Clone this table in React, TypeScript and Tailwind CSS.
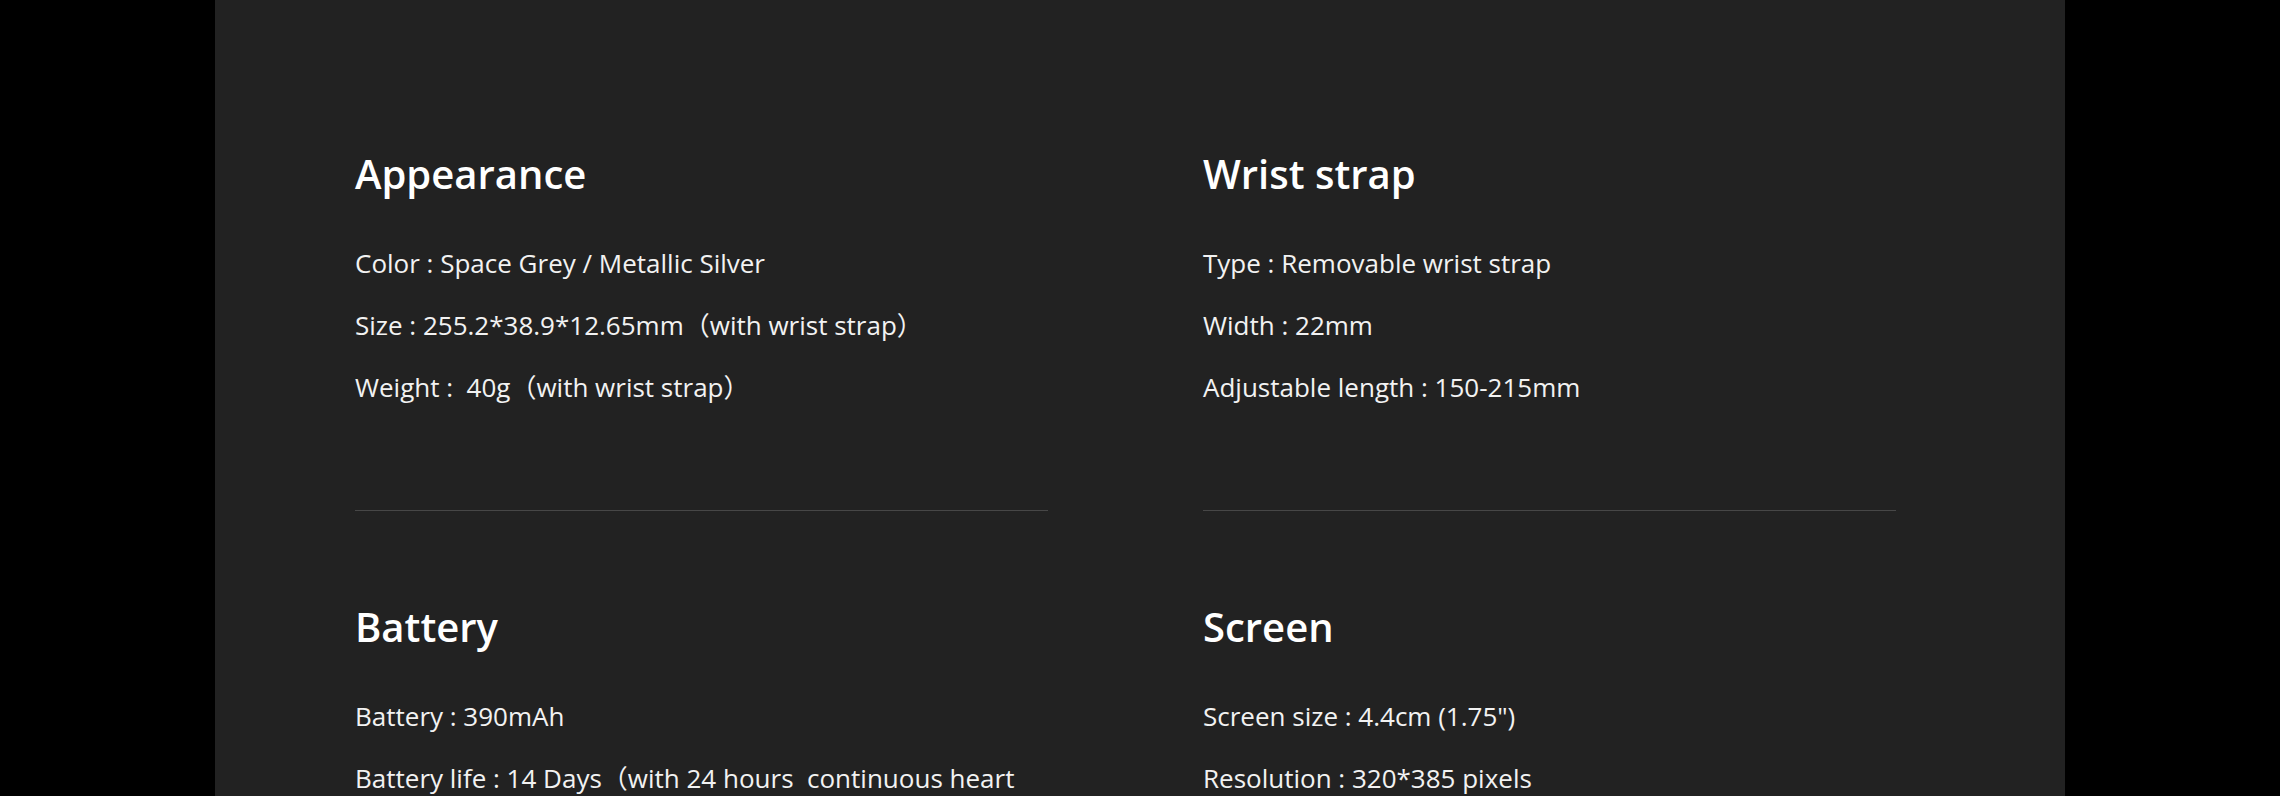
const specs = [
  {
    title: "Appearance",
    rows: [
      "Color : Space Grey / Metallic Silver",
      "Size : 255.2*38.9*12.65mm（with wrist strap）",
      "Weight :  40g（with wrist strap）",
    ],
  },
  {
    title: "Wrist strap",
    rows: ["Type : Removable wrist strap", "Width : 22mm", "Adjustable length : 150-215mm"],
  },
  {
    title: "Battery",
    rows: [
      "Battery : 390mAh",
      "Battery life : 14 Days（with 24 hours  continuous heart rate monitoring）",
      "Charging time : about 2 hours",
    ],
  },
  {
    title: "Screen",
    rows: ["Screen size : 4.4cm (1.75\")", "Resolution : 320*385 pixels", "Screen type : AMOLED"],
  },
];

function SpecBlock({ title, rows, last }: { title: string; rows: string[]; last: boolean }) {
  return (
    <div className={last ? "pt-[92px]" : "pt-[150px]"}>
      <h3 className="text-[40px] leading-[48px] font-semibold text-white mb-[46px]">{title}</h3>
      <div className="flex flex-col gap-6">
        {rows.map((r) => (
          <p key={r} className="text-[26px] leading-[38px] text-[#f2f2f2] whitespace-pre-wrap">
            {r}
          </p>
        ))}
      </div>
      {!last && <div className="mt-[104px] h-px bg-[#474747]" />}
    </div>
  );
}

export default function App() {
  return (
    <div
      className="h-[796px] overflow-hidden bg-black"
      style={{ fontFamily: '"Open Sans", "Noto Sans CJK SC", sans-serif' }}
    >
      <div className="mx-auto w-[1850px] h-full bg-[#222222] pl-[140px]">
        <div className="grid grid-cols-[693px_693px] gap-x-[155px]">
          {specs.map((s, i) => (
            <SpecBlock key={s.title} title={s.title} rows={s.rows} last={i >= 2} />
          ))}
        </div>
      </div>
    </div>
  );
}
